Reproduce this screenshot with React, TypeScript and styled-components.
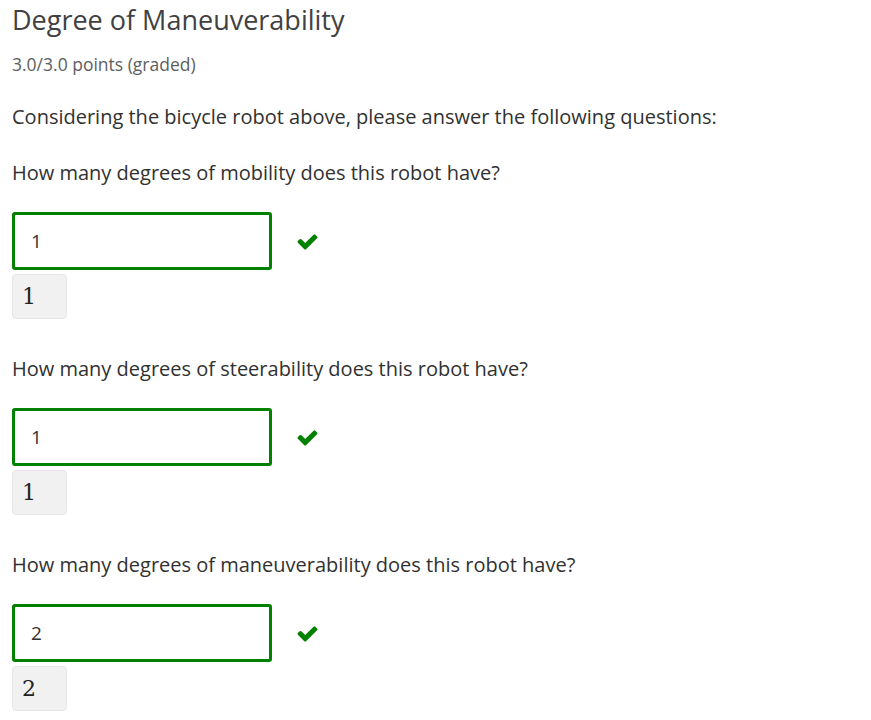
import React from "react";
import styled, { createGlobalStyle } from "styled-components";

const Global = createGlobalStyle`
  html, body { margin: 0; padding: 0; background: #fff; }
  body { font-family: "Open Sans", "Noto Sans", sans-serif; color: #313131; }
`;

const Page = styled.div`
  padding: 2px 12px 0 12px;
  display: flex;
  flex-direction: column;
`;

const Title = styled.h2`
  margin: 0;
  font-size: 27px;
  font-weight: 400;
  line-height: 36px;
  color: #414141;
`;

const Points = styled.div`
  margin-top: 15px;
  font-size: 17.5px;
  line-height: 22px;
  color: #5e5e5e;
`;

const Prompt = styled.p<{ $top: number }>`
  margin: 0;
  margin-top: ${(p) => p.$top}px;
  font-size: 20px;
  line-height: 28px;
  color: #313131;
`;

const AnswerRow = styled.div`
  display: flex;
  align-items: center;
  gap: 24px;
  margin-top: 25px;
`;

const Input = styled.div`
  box-sizing: border-box;
  width: 260px;
  height: 58px;
  border: 3px solid #008100;
  border-radius: 3px;
  padding-left: 16px;
  display: flex;
  align-items: center;
  font-family: "Open Sans", sans-serif;
  font-size: 19px;
  color: #333;
`;

const CheckSvg = styled.svg`
  width: 23px;
  height: 23px;
  fill: #008100;
`;

const Check = () => (
  <CheckSvg viewBox="0 0 1792 1792">
    <path d="M1671 566q0 40-28 68l-724 724-136 136q-28 28-68 28t-68-28l-136-136-362-362q-28-28-28-68t28-68l136-136q28-28 68-28t68 28l294 295 656-657q28-28 68-28t68 28l136 136q28 28 28 68z" />
  </CheckSvg>
);

const Preview = styled.div`
  box-sizing: border-box;
  margin-top: 4px;
  width: 55px;
  height: 45px;
  background: #f1f1f1;
  border: 1px solid #e6e6e6;
  border-radius: 4px;
  display: flex;
  align-items: center;
  padding-left: 9px;
  font-family: "DejaVu Serif", "Liberation Serif", serif;
  font-size: 22px;
  color: #222;
`;

const questions = [
  { q: "How many degrees of mobility does this robot have?", a: "1" },
  { q: "How many degrees of steerability does this robot have?", a: "1" },
  { q: "How many degrees of maneuverability does this robot have?", a: "2" },
];

export default function App() {
  return (
    <>
      <Global />
      <Page>
        <Title>Degree of Maneuverability</Title>
        <Points>3.0/3.0 points (graded)</Points>
        <Prompt $top={28}>
          Considering the bicycle robot above, please answer the following questions:
        </Prompt>
        {questions.map((item, i) => (
          <React.Fragment key={i}>
            <Prompt $top={i === 0 ? 28 : 36}>{item.q}</Prompt>
            <AnswerRow>
              <Input>{item.a}</Input>
              <Check />
            </AnswerRow>
            <Preview>{item.a}</Preview>
          </React.Fragment>
        ))}
      </Page>
    </>
  );
}
